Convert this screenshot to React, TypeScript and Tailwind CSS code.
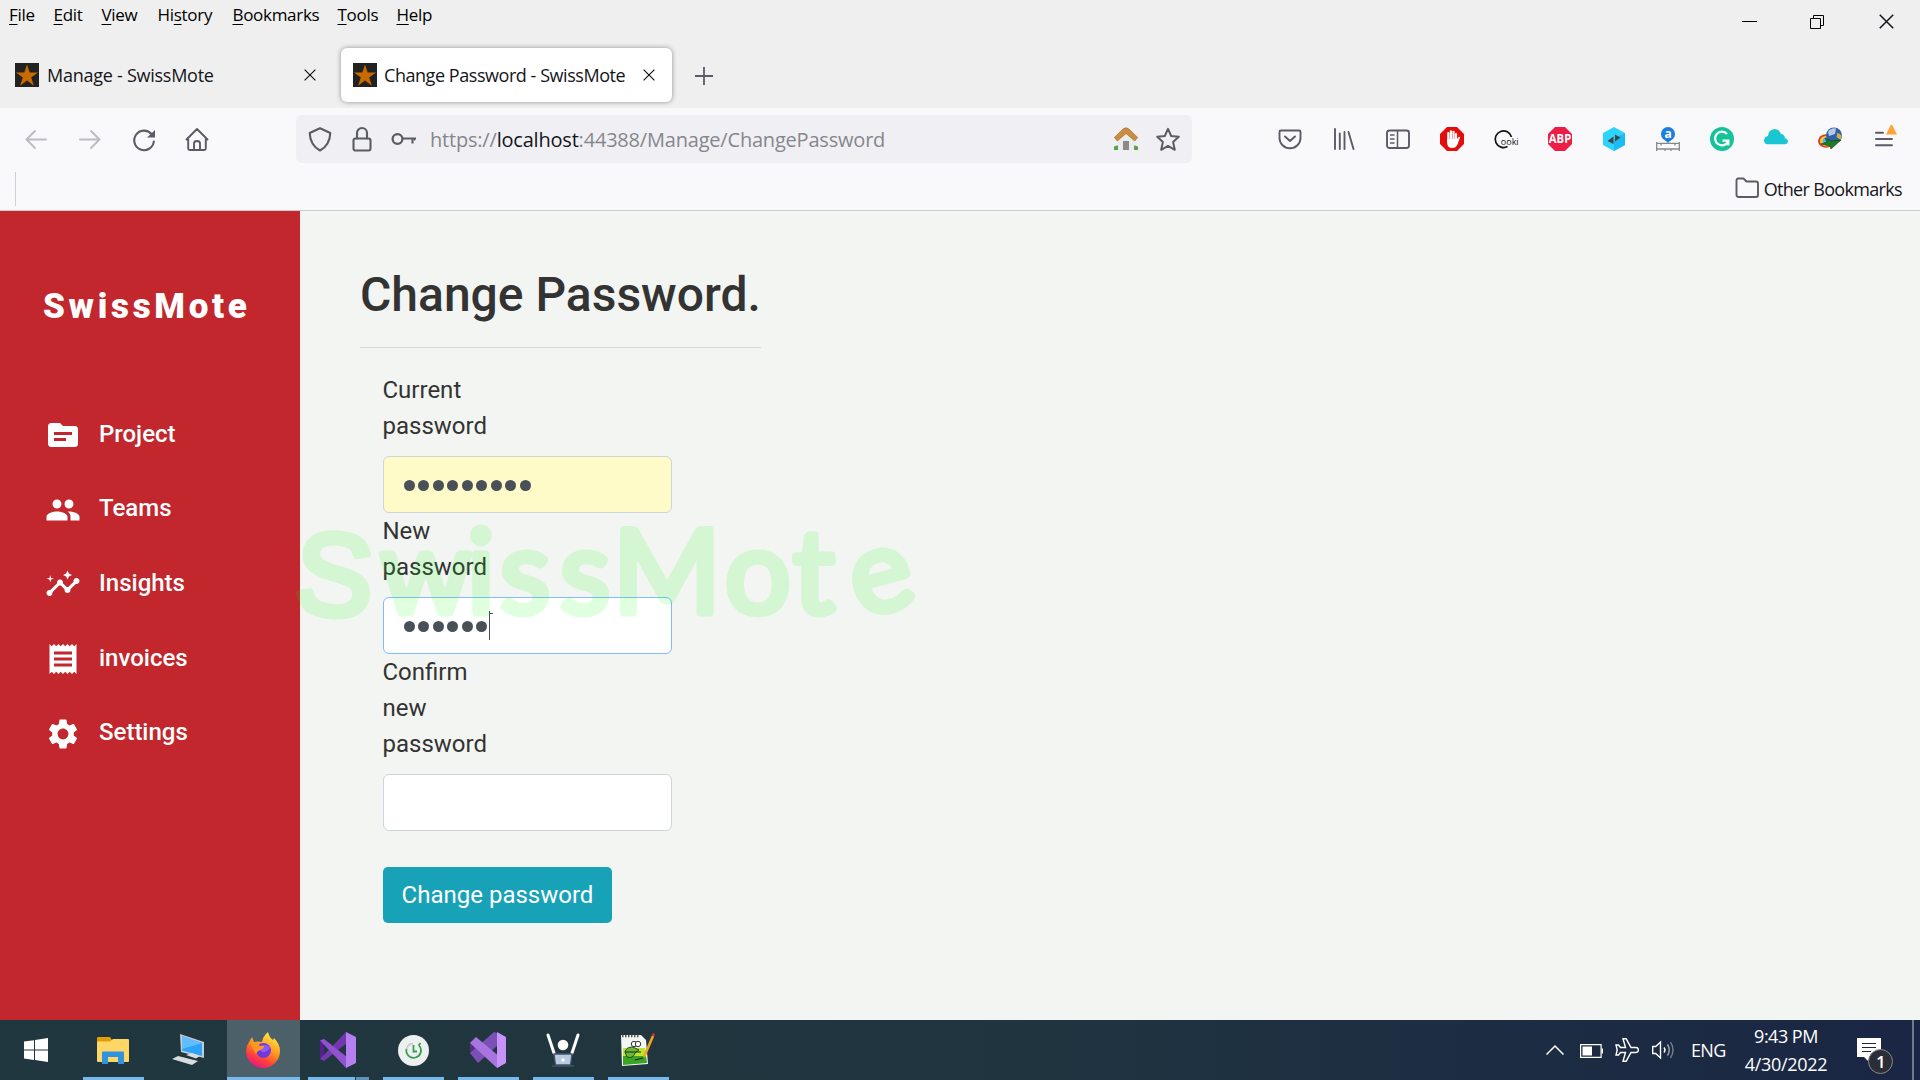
import React from "react";
import { MdTopic, MdPeople, MdInsights, MdReceipt, MdSettings } from "react-icons/md";

const UI = "font-['Open_Sans',sans-serif]";

function Favicon() {
  return (
    <svg className="h-6 w-6 shrink-0" viewBox="0 0 24 24">
      <rect width="24" height="24" fill="#222" />
      <path d="M12 1.5l2.7 8H23l-6.8 4.9 2.7 8.3L12 17.6l-6.9 5.1 2.7-8.3L1 9.5h8.3z" fill="#c96a00" />
    </svg>
  );
}

function CloseX({ className }: { className: string }) {
  return (
    <svg className={className} viewBox="0 0 12 12" fill="none" stroke="#15141a" strokeWidth="1.2">
      <path d="M.6.6l10.8 10.8M11.4.6L.6 11.4" />
    </svg>
  );
}

const menus: [string, string, string, string][] = [
  ["", "F", "ile", "w-[44.5px]"],
  ["", "E", "dit", "w-[48px]"],
  ["", "V", "iew", "w-[56px]"],
  ["Hi", "s", "tory", "w-[75px]"],
  ["", "B", "ookmarks", "w-[105px]"],
  ["", "T", "ools", "w-[59px]"],
  ["", "H", "elp", "w-[60px]"],
];

function TitleBar() {
  return (
    <div className="flex h-[46px] justify-between">
      <div className="flex pl-[9px] pt-[3px] text-[17px] leading-6 tracking-[-0.3px] text-black">
        {menus.map(([a, u, b, w]) => (
          <div key={u + b} className={`${w} whitespace-nowrap`}>
            {a}
            <span className="underline decoration-1 underline-offset-[3px]">{u}</span>
            {b}
          </div>
        ))}
      </div>
      <div className="flex h-[42px] items-center text-black">
        <div className="flex w-[68px] justify-center"><div className="h-px w-[15px] bg-black" /></div>
        <div className="flex w-[69px] justify-center">
          <svg className="h-[15px] w-[15px]" viewBox="0 0 15 15" fill="none" stroke="#000">
            <path d="M.5 4.5h10v10h-10zM3.500 4.500v-3h10v10h-3" />
          </svg>
        </div>
        <div className="flex w-[68px] justify-center"><CloseX className="h-[15px] w-[15px]" /></div>
      </div>
    </div>
  );
}

function Tabs() {
  return (
    <div className="flex h-[62px] items-start pt-[2px] text-[18px] tracking-[-0.45px] text-[#15141a]">
      <div className="flex h-[54px] w-[331px] items-center pl-[15px]">
        <Favicon />
        <span className="ml-2 flex-1 whitespace-nowrap pt-px tracking-[-0.26px]">Manage - SwissMote</span>
        <CloseX className="mr-[15px] h-3 w-3" />
      </div>
      <div className="ml-[10px] flex h-[54px] w-[331px] items-center rounded-md bg-white pl-3 shadow-[0_0_5px_rgba(0,0,0,0.4)]">
        <Favicon />
        <span className="ml-[7px] flex-1 whitespace-nowrap pt-px">Change Password - SwissMote</span>
        <CloseX className="mr-[17px] h-3 w-3" />
      </div>
      <svg className="ml-[23px] mt-[19px] h-[18px] w-[18px]" viewBox="0 0 18 18" stroke="#5b5b66" strokeWidth="1.8">
        <path d="M9 0v18M0 9h18" />
      </svg>
    </div>
  );
}

const stroke = { fill: "none", stroke: "#5b5b66", strokeWidth: 1.9, strokeLinecap: "round" as const, strokeLinejoin: "round" as const };

function Icon({ children, className = "" }: { children: React.ReactNode; className?: string }) {
  return (
    <svg className={`h-6 w-6 shrink-0 overflow-visible ${className}`} viewBox="0 0 24 24">
      {children}
    </svg>
  );
}

function Toolbar() {
  return (
    <div className="flex h-[60px] items-center pt-[1px]">
      <div className="flex w-[296px] items-center gap-[30px] pl-6">
        <Icon><path {...stroke} stroke="#bcbcc2" d="M22 12.500H2.500M11 4L2.500 12.500 11 21" /></Icon>
        <Icon><path {...stroke} stroke="#bcbcc2" d="M2 12.500h19.500M13 4l8.500 8.500L13 21" /></Icon>
        <Icon>
          <path {...stroke} strokeWidth={2.1} d="M21.800 14.500A9.800 9.800 0 1 1 19.500 7" />
          <path fill="#5b5b66" d="M23 3v7.500h-8z" />
        </Icon>
        <Icon className="-ml-[1px]">
          <path {...stroke} d="M1.500 12.500L12 2l10.500 10.500M3.200 11v10.500q0 1.500 1.500 1.500h14.600q1.500 0 1.500-1.500V11M9 22.500V16.500q0-2.500 3-2.500t3 2.500v6" />
        </Icon>
      </div>
      <div className="flex h-12 w-[896px] items-center rounded-md bg-[#f0f0f4] pl-3 pr-3">
        <Icon><path {...stroke} strokeWidth={2.1} d="M12 1.200L22.300 6C22 14 18.500 20 12 23.500 5.500 20 2 14 1.700 6z" /></Icon>
        <Icon className="ml-[18px]">
          <rect {...stroke} strokeWidth={2.1} x="3.500" y="11.500" width="17" height="12" rx="2" />
          <path {...stroke} strokeWidth={2.1} d="M7 11.500V6a5 5 0 0 1 10 0v5.500" />
        </Icon>
        <Icon className="ml-[18px]">
          <circle {...stroke} strokeWidth={2.3} cx="5.500" cy="12" r="4.900" />
          <path {...stroke} strokeWidth={2.1} strokeLinecap="butt" d="M10 11.500h14M20.500 11.500v5" />
          <path {...stroke} strokeWidth={1.5} strokeLinecap="butt" d="M22.500 11.500v2" />
        </Icon>
        <div className="ml-[14px] flex-1 whitespace-nowrap pt-[2px] text-[20px] tracking-[-0.2px] text-[#86868d]">
          https://<span className="text-[#15141a]">localhost</span>:44388/Manage/ChangePassword
        </div>
        <Icon>
          <path fill="#5aa54a" d="M0 19.500q4-2 7 0h10q3-2 7 0V23H0z" />
          <path fill="#ececec" d="M4 11l8-7 8 7v12H4z" />
          <path fill="#8a8a8a" d="M9 14h6v9H9z" />
          <path fill="#c98d42" stroke="#a87434" strokeWidth=".7" d="M.3 10.500L9 2q3-2.500 6 0l8.700 8.500-3 3.500-8.700-7.500L3.300 14z" />
        </Icon>
        <Icon className="ml-[18px]">
          <path {...stroke} strokeWidth={2} d="M12 1.800l3.200 7.200 7.600.8-5.700 5.200 1.700 7.800-6.800-4-6.800 4 1.700-7.800L1.200 9.800l7.600-.8z" />
        </Icon>
      </div>
      <div className="flex flex-1 items-center justify-between pl-[86px] pr-6">
        <Icon><path {...stroke} d="M3 3.500h18a1.500 1.500 0 0 1 1.500 1.500v6a10.500 10.300 0 0 1-21 0V5A1.500 1.500 0 0 1 3 3.500zM7 9.500l5 4.500 5-4.500" /></Icon>
        <Icon><path {...stroke} d="M3 2v20M7.800 6.500V22M12.500 5v17M16.500 5l5 17" /></Icon>
        <Icon>
          <rect {...stroke} x="1" y="3.500" width="22" height="17.500" rx="2.500" />
          <path {...stroke} strokeWidth={1.5} d="M11.500 4v17M4.500 8h3.500M4.500 12h3.500M4.500 16h3.500" />
        </Icon>
        <Icon>
          <path fill="#e40d0d" d="M7 0h10l7 7v10l-7 7H7l-7-7V7z" />
          <path stroke="#fff" strokeWidth="2.200" strokeLinecap="round" d="M8.300 6v9M10.900 4.300V14M13.500 4.800v9M16 7v8" />
          <path fill="#fff" d="M7.200 12h9.900l1.500-2q1-.8 1.400.4L17.500 17.500q-1.700 3.500-5.300 3.500-5 0-5-5z" />
        </Icon>
        <Icon>
          <path fill="none" stroke="#111" strokeWidth="1.700" d="M17.500 10A8.300 8.300 0 1 0 13.500 19.500" />
          <text x="6.800" y="18" fontSize="9" fontFamily="Open Sans" fill="#111">ooki</text>
        </Icon>
        <Icon>
          <path fill="#ed1e45" d="M7 0h10l7 7v10l-7 7H7l-7-7V7z" />
          <text x="12" y="16.200" fontSize="11.500" textAnchor="middle" textLength="22.500" lengthAdjust="spacingAndGlyphs" fontWeight="700" fontFamily="Open Sans" fill="#fff">ABP</text>
        </Icon>
        <Icon>
          <path fill="#2ad4fb" d="M12 0l11 6v12l-11 6L1 18V6z" />
          <path fill="#1cbcf2" d="M23 6v12l-11 6V12z" />
          <path fill="#444" d="M11.500 9.500v7.500L5.500 14zM13 7.500v7L18.500 10.500z" />
        </Icon>
        <Icon>
          <circle cx="12" cy="7" r="7" fill="#1a7de0" />
          <path fill="#1a7de0" d="M8 12l4 4 4-4z" />
          <text x="12" y="11" fontSize="12" textAnchor="middle" fontWeight="700" fontFamily="Open Sans" fill="#fff">a</text>
          <path fill="none" stroke="#888" strokeWidth="1.300" d="M.7 15v9M23.300 15v9M.7 16.300h22.600M.7 22h22.600M5 17v1.500M9 22v2M15 22v2M19 17v1.500" />
        </Icon>
        <Icon>
          <circle cx="12" cy="12" r="12" fill="#15c39a" />
          <path fill="none" stroke="#fff" strokeWidth="2.300" d="M17 7A6.800 6.800 0 1 0 18 14.500M12.500 13.600h5.800v5" />
        </Icon>
        <Icon>
          <path fill="#19c6d1" d="M4 17.300Q0 17 0 13.200 .5 9.500 4 9 4.500 2.500 10.500 2q5 .2 6.500 5 3.500.3 4 4.200 3 .8 3 3.300-.2 2.500-3 2.800z" />
        </Icon>
        <Icon>
          <ellipse cx="8" cy="14" rx="8" ry="6.800" fill="#e23a2e" />
          <ellipse cx="8.700" cy="14" rx="6.700" ry="5.300" fill="#f2d327" />
          <ellipse cx="9.500" cy="14" rx="5" ry="3.800" fill="#49b6e9" />
          <circle cx="16" cy="8.500" r="8" fill="#2f5fa8" />
          <path fill="#b4cbe2" d="M10 5q3-4.500 8-3.500l-1 5.500-6 2z" />
          <path fill="#d8b13c" d="M19.500 5.500l4 3-1 4.500-4-3z" />
          <path fill="#1d7d22" stroke="#123e15" strokeWidth=".6" d="M7 11l6 3 10-1-10 9-1-3-9-2 6-2z" />
        </Icon>
        <Icon>
          <path {...stroke} d="M4 5.800h7M4 12h16M4 18.200h16" />
          <path fill="#ffa436" d="M14 7.500L18.500-1.500q1-1.500 2 0L25 7.500z" />
        </Icon>
      </div>
    </div>
  );
}

function BookmarksBar() {
  return (
    <div className="flex h-[43px] items-center justify-between border-b border-[#ccc] pl-[15px] pr-[18px]">
      <div className="h-[34px] w-px bg-[#cfcfd4]" />
      <div className="flex items-center gap-[5px] pt-px text-[18px] tracking-[-0.67px] text-[#15141a]">
        <svg className="-mt-[3px] h-6 w-6" viewBox="0 0 24 24">
          <path {...stroke} d="M3 2.500h5.500l3 3H21a2 2 0 0 1 2 2V19a2 2 0 0 1-2 2H3.500a2 2 0 0 1-2-2V4.500a2 2 0 0 1 1.500-2z" />
        </svg>
        Other Bookmarks
      </div>
    </div>
  );
}

const nav = [
  { label: "Project", I: MdTopic },
  { label: "Teams", I: MdPeople },
  { label: "Insights", I: MdInsights },
  { label: "invoices", I: MdReceipt },
  { label: "Settings", I: MdSettings },
];

function Sidebar() {
  return (
    <div className="w-[300px] shrink-0 bg-[#c1272d] pt-[73px] text-white">
      <div className="pl-[43px] text-[35px] font-black leading-[46px] tracking-[3.7px]">SwissMote</div>
      <div className="mt-[67px] flex flex-col">
        {nav.map(({ label, I }) => (
          <div key={label} className="flex h-[74.600px] items-center pl-[45px] text-[24px] font-medium leading-9">
            <I className="mt-[2px] h-9 w-9" />
            <span className="-mt-px ml-[18px]">{label}</span>
          </div>
        ))}
      </div>
    </div>
  );
}

function Dots({ n }: { n: number }) {
  return (
    <div className="flex gap-[3.500px]">
      {Array.from({ length: n }, (_, i) => (
        <div key={i} className="h-[11px] w-[11px] rounded-full bg-[#495057]" />
      ))}
    </div>
  );
}

function Form() {
  return (
    <div className="pl-[60px] pt-[55px] text-[#333]">
      <h1 className="w-[401px] whitespace-nowrap text-[48px] font-medium leading-[58px]">Change Password.</h1>
      <div className="mt-[23px] h-px w-[401px] bg-[#d9dbd9]" />
      <div className="ml-[23px] mt-6 w-[289px] text-[24px] leading-9">
        <div className="-ml-[0.500px] w-[110px]">Current password</div>
        <div className="mt-3 flex h-[57px] items-center rounded-md border border-[#ced4da] bg-[#fffbc8] pl-[19.500px] pt-[2px]">
          <Dots n={9} />
        </div>
        <div className="-ml-[0.500px] w-[110px]">New password</div>
        <div className="mt-3 flex h-[57px] items-center rounded-md border border-[#80bdff] bg-white pl-[19.500px]">
          <div className="pt-[2px]"><Dots n={6} /></div>
          <div className="ml-[2px] flex h-[29px] items-start">
            <div className="h-[29px] w-px bg-[#495057]" />
            <div className="mt-[2px] h-px w-[3px] bg-[#495057]" />
          </div>
        </div>
        <div className="-ml-[0.500px] w-[110px]">Confirm new password</div>
        <div className="mt-3 h-[57px] rounded-md border border-[#ced4da] bg-white" />
        <div className="mt-9 flex h-14 w-[229px] items-center justify-center whitespace-nowrap rounded-[5px] bg-[#17a2b8] text-white">
          Change password
        </div>
      </div>
    </div>
  );
}

function Watermark() {
  return (
    <svg className="pointer-events-none absolute left-[280px] top-[500px] h-[140px] w-[660px]" viewBox="280 500 660 140">
      <g opacity="0.12" fill="#00ff00" stroke="#00ff00" strokeWidth="7" strokeLinejoin="round">
        <text
          x="293 380 467 500 560 613 725 793 860"
          y="612 613 613 613 613 613 613 613 618"
          rotate="4 0 0 0 0 0 0 0 -15"
          fontSize="116"
          fontFamily="Lato"
        >
          <tspan fontFamily="Liberation Sans">S</tspan>wissMote
        </text>
      </g>
    </svg>
  );
}

function VsIcon({ flip }: { flip?: boolean }) {
  return flip ? (
    <svg className="h-9 w-9" viewBox="0 0 36 36">
      <path fill="#52307c" d="M0 11l6-6v20l-6-4z" />
      <path fill="#7a50b5" d="M8 31L0 21l24-21 3 1v13z" />
      <path fill="#a874e0" d="M0 11l6-6 30 25-9 6z" />
      <path fill="#c793f8" d="M27 0l9 5v26l-9 5z" />
    </svg>
  ) : (
    <svg className="h-9 w-9" viewBox="0 0 36 36">
      <path fill="#52218a" d="M0 8.500L4 7v22l-4-2z" />
      <path fill="#7438ad" d="M4 29l-4-2L26 0l1 11z" />
      <path fill="#9052cf" d="M0 8.500L4 7l23 18-1 11z" />
      <path fill="#b57ff0" d="M26 0l10 5v26l-10 5z" />
    </svg>
  );
}

function Firefox() {
  return (
    <svg className="-ml-px h-9 w-9" viewBox="0 0 36 36">
      <defs>
        <linearGradient id="ff" x1=".8" y1="0" x2=".3" y2="1">
          <stop offset="0" stopColor="#fff34a" />
          <stop offset=".45" stopColor="#ff9a1f" />
          <stop offset=".75" stopColor="#ff3f3c" />
          <stop offset="1" stopColor="#e31587" />
        </linearGradient>
      </defs>
      <path fill="url(#ff)" d="M4 10l3-5 2 5q4-1 8 0 1-6 6-10 1 5 5 8l1-2q6 6 6 13A17 17 0 0 1 1 19q0-5 3-9z" />
      <circle cx="18.500" cy="18.500" r="7.500" fill="#7139d8" />
      <path fill="#9059ff" d="M13 16q5-6 12-1-2 6-8 5z" />
      <path fill="#ff9822" d="M5 11q7-1 10 3h4q0 3-4 4-3 1-4 4-3-5-6-11z" />
    </svg>
  );
}

function Task({ w, children, bar = "", cls = "" }: { w: string; children: React.ReactNode; bar?: string; cls?: string }) {
  return (
    <div className={`flex h-[60px] flex-col items-center ${w} ${cls}`}>
      <div className="flex h-[57px] items-center pt-[3px]">{children}</div>
      {bar && <div className={`h-[3px] bg-[#76b9ed] ${bar}`} />}
    </div>
  );
}

function Taskbar() {
  return (
    <div className="flex h-[60px] justify-between bg-gradient-to-r from-[#21373f] via-[#20353f] to-[#1a2644]">
      <div className="flex">
        <Task w="w-[72px]">
          <svg className="h-6 w-6" viewBox="0 0 24 24"><path fill="#fff" d="M0 3.500l10-1.300V11.500H0zM11 2l13-2v11.500H11zM0 12.500h10v9.400L0 20.500zM11 12.500h13V24l-13-2z" /></svg>
        </Task>
        <Task w="w-[83px]" bar="w-[61px]">
          <svg className="-ml-px h-[27px] w-8" viewBox="0 0 32 27">
            <path fill="#e09d06" d="M0 1q0-1 1-1h12l2 3v4H0z" />
            <path fill="#ffd766" d="M0 4.500h13l3-2.500h15q1 0 1 1v21q0 1-1 1H1q-1 0-1-1z" />
            <path fill="#2f93e0" d="M6 14.500h20q1 0 1 1V27h-6v-7H11v7H5V15.500q0-1 1-1z" />
          </svg>
        </Task>
        <Task w="w-[72px]">
          <svg className="-ml-[6px] h-8 w-8" viewBox="0 0 32 32">
            <path fill="#c7ccd0" d="M8 0l24 8v16L9 18z" />
            <path fill="#2da4f7" d="M10 2l20 7v13L10 16.500z" />
            <path fill="#62bdff" d="M10 2l20 7-20 6z" />
            <path fill="#d9dde0" d="M0 25l6-3 20 5-6 4zM14 21l6-2 8 3-4 2.500z" />
          </svg>
        </Task>
        <Task w="w-[73px]" bar="w-full" cls="bg-[#4c6069]"><Firefox /></Task>
        <div className="flex h-[60px] w-[76px] flex-col items-center">
          <div className="flex h-[57px] items-center pt-[3px]"><VsIcon /></div>
          <div className="ml-[1px] flex h-[3px] w-[61px] gap-px">
            <div className="w-[47px] bg-[#76b9ed]" /><div className="flex-1 bg-[#5d93bd]" />
          </div>
        </div>
        <Task w="w-[75px]" bar="w-[61px]">
          <svg className="-ml-px h-[31px] w-[31px]" viewBox="0 0 31 31">
            <circle cx="15.500" cy="15.500" r="15.500" fill="#edf0f0" />
            <path fill="none" stroke="#3d9c4c" strokeWidth="1.800" d="M21 10.500A7.300 7.300 0 1 1 8.500 14M15.500 10v6.500H19M20.500 10.500l2-2.500" />
            <path fill="none" stroke="#c8d2ca" strokeWidth="1.800" d="M8.500 14A7.300 7.300 0 0 1 15 8.500" />
          </svg>
        </Task>
        <Task w="w-[75px]" bar="w-[61px]"><div className="-ml-px"><VsIcon flip /></div></Task>
        <Task w="w-[75px]" bar="w-[61px]">
          <svg className="-ml-px h-[34px] w-[34px]" viewBox="0 0 34 34">
            <path stroke="#fff" strokeWidth="3" strokeLinecap="round" d="M2 2l6 18M32 2l-6 18" />
            <circle cx="17" cy="12" r="5.300" fill="#fff" />
            <path fill="#b8cbe0" stroke="#45506a" strokeWidth="1.300" d="M8 21h18l-1.500 11h-15z" />
            <circle cx="17" cy="27" r="1.700" fill="#fff" />
            <path stroke="#45506a" strokeWidth="1.500" d="M6 33h22" />
          </svg>
        </Task>
        <Task w="w-[75px]" bar="w-[61px]">
          <svg className="-ml-px h-[34px] w-[34px]" viewBox="0 0 34 34">
            <path fill="#f3f6f3" d="M0 2h20l5 5 2 24-26 2z" />
            <path fill="#b9e62e" d="M2 15h22l1 8H2z" />
            <path fill="#3aa522" d="M2 23h23l1 7-24 2z" />
            <path stroke="#555" strokeDasharray="1.500 1.500" strokeWidth="2.500" d="M1 3h18" />
            <path fill="#6cb83a" stroke="#234b15" strokeWidth="1" d="M4 19q1-5 8-5l6 3-4 3q-2 6-8 4z" />
            <path stroke="#222" strokeWidth="1.200" fill="none" d="M4 19h16M14 27l8-2" />
            <circle cx="13" cy="11" r="2.700" fill="#fff" stroke="#333" />
            <circle cx="17" cy="11" r="2.700" fill="#fff" stroke="#333" />
            <path stroke="#f0a51c" strokeWidth="2.600" d="M23 24l9-21" />
            <path stroke="#c33" strokeWidth="2.600" d="M32 3l1-2.500" />
          </svg>
        </Task>
      </div>
      <div className="flex items-center text-[18px] tracking-[-0.5px] text-white">
        <svg className="h-[10px] w-[18px]" viewBox="0 0 18 10" fill="none" stroke="#fff" strokeWidth="1.500"><path d="M.5 9.500L9 1l8.500 8.500" /></svg>
        <svg className="ml-4 mt-[2px] h-[14px] w-[23px]" viewBox="0 0 23 14"><path fill="none" stroke="#fff" strokeWidth="1.200" d="M.6.6h20.500v12.800H.6z" /><path fill="#fff" d="M2.500 2.500h9.500v9H2.500zM21.500 4.500H23v5h-1.500z" /></svg>
        <svg className="ml-3 h-6 w-6" viewBox="0 0 24 24" fill="none" stroke="#fff" strokeWidth="1.400"><path d="M8 .8h3.200L16 9.500h5q2.400 0 2.400 2.500T21 14.500h-5L11.200 23.200H8l2.500-8.700H5.500L3.500 17H1l1.200-5L1 7h2.500l2 2.500h5z" /></svg>
        <svg className="ml-[13px] h-5 w-[23px]" viewBox="0 0 23 20" fill="none" stroke="#fff" strokeWidth="1.400"><path d="M.7 6.500h3L8.500 2v16l-4.800-4.500h-3zM12 7.500q2 2.500 0 5" /><path opacity=".6" d="M15.500 4.500q3.500 5.500 0 11" /><path opacity=".4" d="M18.500 2q5 8 0 16" /></svg>
        <div className="ml-[16px] w-[35px] tracking-[-0.7px]">ENG</div>
        <div className="ml-[16px] flex w-[88px] flex-col whitespace-nowrap text-center leading-7"><span>9:43 PM</span><span className="tracking-[-0.3px]">4/30/2022</span></div>
        <div className="relative ml-[27px] h-6 w-9">
          <svg className="h-6 w-6" viewBox="0 0 24 24"><path fill="#fff" d="M0 0h24v19H15l-4 4-4-4H0z" /><path stroke="#1a2644" strokeWidth="1.200" d="M5 5.500h14M5 9.500h14M5 13.500h9" /></svg>
          <div className="absolute left-[11px] top-[11px] flex h-[25px] w-[25px] items-center justify-center rounded-full border border-[#888] bg-[#2b2e36] text-[17px] font-semibold">1</div>
        </div>
        <div className="ml-[19px] mr-[6px] h-[60px] w-[2px] bg-[#6f7a8c]" />
      </div>
    </div>
  );
}

export default function App() {
  return (
    <div className="relative flex h-[1080px] w-[1920px] flex-col overflow-hidden bg-[#f3f5f2] font-['Roboto',sans-serif]">
      <div className={`h-[108px] bg-[#efefef] ${UI}`}>
        <TitleBar />
        <Tabs />
      </div>
      <div className={`h-[103px] bg-[#f9f9fb] ${UI}`}>
        <Toolbar />
        <BookmarksBar />
      </div>
      <div className="flex h-[809px]">
        <Sidebar />
        <Form />
      </div>
      <div className={UI}>
        <Taskbar />
      </div>
      <Watermark />
    </div>
  );
}
